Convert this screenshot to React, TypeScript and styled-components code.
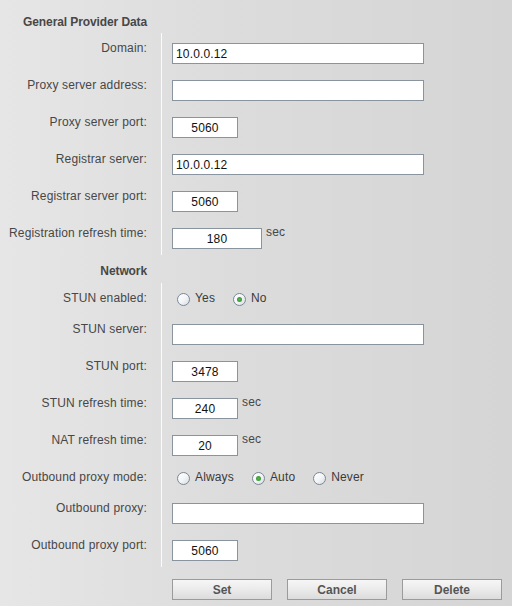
import styled, { createGlobalStyle } from "styled-components";

const GlobalStyle = createGlobalStyle`
  html, body {
    margin: 0;
    padding: 0;
  }
  body {
    font-family: "Liberation Sans", Arial, sans-serif;
  }
`;

const Page = styled.div`
  width: 512px;
  min-height: 606px;
  background: linear-gradient(90deg, #e6e6e6 0%, #dcdcdc 45%, #d5d5d5 100%);
  font-size: 12px;
  color: #444;
  letter-spacing: 0.15px;
`;

const HeadingRow = styled.div<{ $top: number; $height: number }>`
  display: grid;
  grid-template-columns: 161px 1fr;
  height: ${(p) => p.$height}px;
  box-sizing: border-box;
  padding-top: ${(p) => p.$top}px;
`;

const Heading = styled.div`
  text-align: right;
  padding-right: 14px;
  font-weight: bold;
  color: #474747;
  line-height: 14px;
  letter-spacing: -0.1px;
`;

const Row = styled.div<{ $radio?: boolean }>`
  display: grid;
  grid-template-columns: 161px 1fr;
  height: ${(p) => (p.$radio ? 31 : 37)}px;
`;

const Label = styled.div`
  text-align: right;
  padding-right: 14px;
  line-height: 14px;
  padding-top: 8px;
  color: #474747;
`;

const Field = styled.div<{ $radio?: boolean }>`
  border-left: 1px solid #fbfbfb;
  display: flex;
  align-items: ${(p) => (p.$radio ? "center" : "flex-start")};
  padding-left: ${(p) => (p.$radio ? 15 : 10)}px;
  padding-top: ${(p) => (p.$radio ? 0 : 10)}px;
  box-sizing: border-box;
`;

const Input = styled.input<{ $size: "long" | "short" | "medium" }>`
  box-sizing: border-box;
  width: ${(p) => (p.$size === "long" ? 252 : p.$size === "medium" ? 90 : 66)}px;
  height: 21px;
  margin: 0;
  padding: 0 3px;
  border: 1px solid #8a949e;
  border-radius: 0;
  background: #fff;
  font-family: "Liberation Sans", Arial, sans-serif;
  font-size: 12px;
  letter-spacing: 0.15px;
  color: #111;
  text-align: ${(p) => (p.$size === "long" ? "left" : "center")};
  outline: none;
`;

const Unit = styled.span`
  margin-left: 4px;
  margin-top: -3px;
  line-height: 14px;
  color: #474747;
`;

const RadioGroup = styled.div`
  display: flex;
  align-items: center;
  gap: 18px;
`;

const RadioOption = styled.label`
  display: flex;
  align-items: center;
  gap: 5px;
  line-height: 14px;
  color: #3a3a3a;
  margin-top: -1px;
`;

const RadioDot = styled.span<{ $checked?: boolean }>`
  position: relative;
  box-sizing: border-box;
  width: 13px;
  height: 13px;
  border-radius: 50%;
  border: 1px solid #7b8896;
  background: linear-gradient(135deg, #ffffff 0%, #f2f4f6 55%, #d6dbe0 100%);
  margin-top: 2px;

  &::after {
    content: "";
    display: ${(p) => (p.$checked ? "block" : "none")};
    position: absolute;
    left: 3px;
    top: 3px;
    width: 5px;
    height: 5px;
    border-radius: 50%;
    background: radial-gradient(circle, #58b84e 0%, #2f8a2c 100%);
  }
`;

const Buttons = styled.div`
  display: flex;
  gap: 15px;
  padding: 12px 0 0 172px;
`;

const Button = styled.button`
  box-sizing: border-box;
  width: 100px;
  height: 21px;
  margin: 0;
  padding: 0;
  border: 1px solid #9b9b9b;
  border-radius: 0;
  background: linear-gradient(180deg, #f6f6f6 0%, #ececec 45%, #dcdcdc 100%);
  font-family: "Liberation Sans", Arial, sans-serif;
  font-size: 12px;
  font-weight: bold;
  color: #555;
`;

type Size = "long" | "short" | "medium";

const InputRow = ({
  label,
  value = "",
  size,
  unit,
}: {
  label: string;
  value?: string;
  size: Size;
  unit?: string;
}) => (
  <Row>
    <Label>{label}</Label>
    <Field>
      <Input $size={size} defaultValue={value} />
      {unit && <Unit>{unit}</Unit>}
    </Field>
  </Row>
);

const RadioRow = ({
  label,
  options,
  checked,
}: {
  label: string;
  options: string[];
  checked: string;
}) => (
  <Row $radio>
    <Label>{label}</Label>
    <Field $radio>
      <RadioGroup>
        {options.map((o) => (
          <RadioOption key={o}>
            <RadioDot $checked={o === checked} />
            {o}
          </RadioOption>
        ))}
      </RadioGroup>
    </Field>
  </Row>
);

export default function App() {
  return (
    <>
      <GlobalStyle />
      <Page>
        <HeadingRow $top={15} $height={33}>
          <Heading>General Provider Data</Heading>
        </HeadingRow>
        <InputRow label="Domain:" value="10.0.0.12" size="long" />
        <InputRow label="Proxy server address:" size="long" />
        <InputRow label="Proxy server port:" value="5060" size="short" />
        <InputRow label="Registrar server:" value="10.0.0.12" size="long" />
        <InputRow label="Registrar server port:" value="5060" size="short" />
        <InputRow
          label="Registration refresh time:"
          value="180"
          size="medium"
          unit="sec"
        />

        <HeadingRow $top={9} $height={28}>
          <Heading>Network</Heading>
        </HeadingRow>
        <RadioRow label="STUN enabled:" options={["Yes", "No"]} checked="No" />
        <InputRow label="STUN server:" size="long" />
        <InputRow label="STUN port:" value="3478" size="short" />
        <InputRow label="STUN refresh time:" value="240" size="short" unit="sec" />
        <InputRow label="NAT refresh time:" value="20" size="short" unit="sec" />
        <RadioRow
          label="Outbound proxy mode:"
          options={["Always", "Auto", "Never"]}
          checked="Auto"
        />
        <InputRow label="Outbound proxy:" size="long" />
        <InputRow label="Outbound proxy port:" value="5060" size="short" />

        <Buttons>
          <Button>Set</Button>
          <Button>Cancel</Button>
          <Button>Delete</Button>
        </Buttons>
      </Page>
    </>
  );
}
